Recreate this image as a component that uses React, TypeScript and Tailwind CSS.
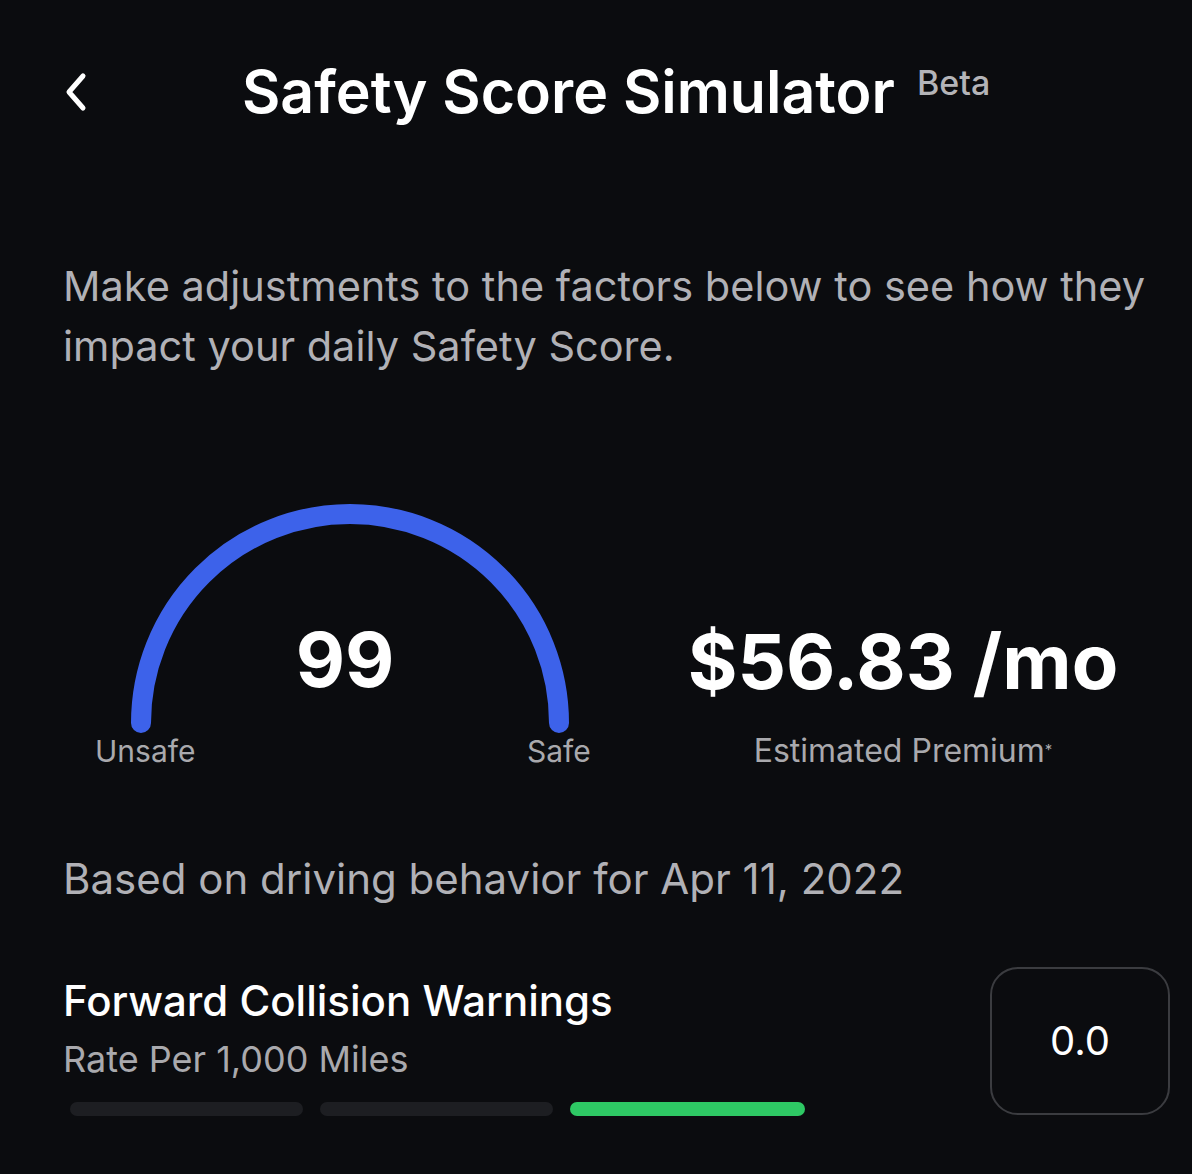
import React from 'react';

const Gauge: React.FC<{ score: number }> = ({ score }) => {
    return (
        <div className="relative w-[520px] h-[280px]">
            <svg width="520" height="280" viewBox="0 0 520 280" className="absolute left-0 top-0">
                <path
                    d="M 46 228 A 209 209 0 0 1 464 228"
                    fill="none"
                    stroke="#3d62ea"
                    strokeWidth="20"
                    strokeLinecap="round"
                />
            </svg>
            <div className="absolute left-0 w-[500px] top-[126px] text-center text-[76px] font-bold text-white leading-none">
                {score}
            </div>
            <div className="absolute left-[0px] top-[241px] text-[30px] leading-none text-[#a9a9ad]">Unsafe</div>
            <div className="absolute left-[432px] top-[241px] text-[30px] leading-none text-[#a9a9ad]">Safe</div>
        </div>
    );
};

const App: React.FC = () => {
    return (
        <div
            className="w-[1192px] h-[1174px] bg-[#0b0c0f] text-white overflow-hidden"
            style={{ fontFamily: 'Inter, "Noto Sans", sans-serif' }}
        >
            {/* header */}
            <div className="flex items-start pt-[62px] pl-[62px] h-[180px]">
                <svg width="28" height="40" viewBox="0 0 28 40" className="mt-[10px]">
                    <path d="M21 4 L7 20 L21 36" fill="none" stroke="#fff" strokeWidth="5" strokeLinecap="round" strokeLinejoin="round" />
                </svg>
                <h1 className="ml-[152px] text-[59px] font-semibold leading-none">Safety Score Simulator</h1>
                <span className="ml-[22px] mt-[4px] text-[34px] leading-none font-medium text-[#b4b4b8]">Beta</span>
            </div>

            <p className="pl-[63px] pr-[20px] mt-[76px] text-[41.5px] leading-[60px] text-[#b1b1b6]">
                Make adjustments to the factors below to see how they impact your daily Safety Score.
            </p>

            {/* gauge + premium */}
            <div className="flex items-start mt-[119px] pl-[95px]">
                <Gauge score={99} />
                <div className="ml-[68px] mt-[128px] flex flex-col items-center w-[440px]">
                    <div className="text-[76px] font-bold leading-none">$56.83 /mo</div>
                    <div className="mt-[36px] text-[32px] leading-none text-[#a9a9ad]">Estimated Premium<sup className="text-[15px]">*</sup></div>
                </div>
            </div>

            <p className="px-[63px] mt-[83px] text-[42px] leading-none text-[#b1b1b6]">Based on driving behavior for Apr 11, 2022</p>

            {/* factor */}
            <div className="flex items-start justify-between mt-[80px] pl-[63px] pr-[22px]">
                <div className="flex flex-col">
                    <div className="text-[42px] font-medium leading-none">Forward Collision Warnings</div>
                    <div className="mt-[19px] text-[36px] text-[#a9a9ad] leading-none">Rate Per 1,000 Miles</div>
                    <div className="flex gap-[17px] mt-[25px] ml-[7px]">
                        <div className="w-[233px] h-[14px] rounded-full bg-[#1d1e22]" />
                        <div className="w-[233px] h-[14px] rounded-full bg-[#1d1e22]" />
                        <div className="w-[235px] h-[14px] rounded-full bg-[#2ec864]" />
                    </div>
                </div>
                <div className="w-[180px] h-[148px] mt-[-13px] rounded-[28px] border-2 border-[#3b3c40] flex items-center justify-center text-[40px]">
                    0.0
                </div>
            </div>
        </div>
    );
};

export default App;
